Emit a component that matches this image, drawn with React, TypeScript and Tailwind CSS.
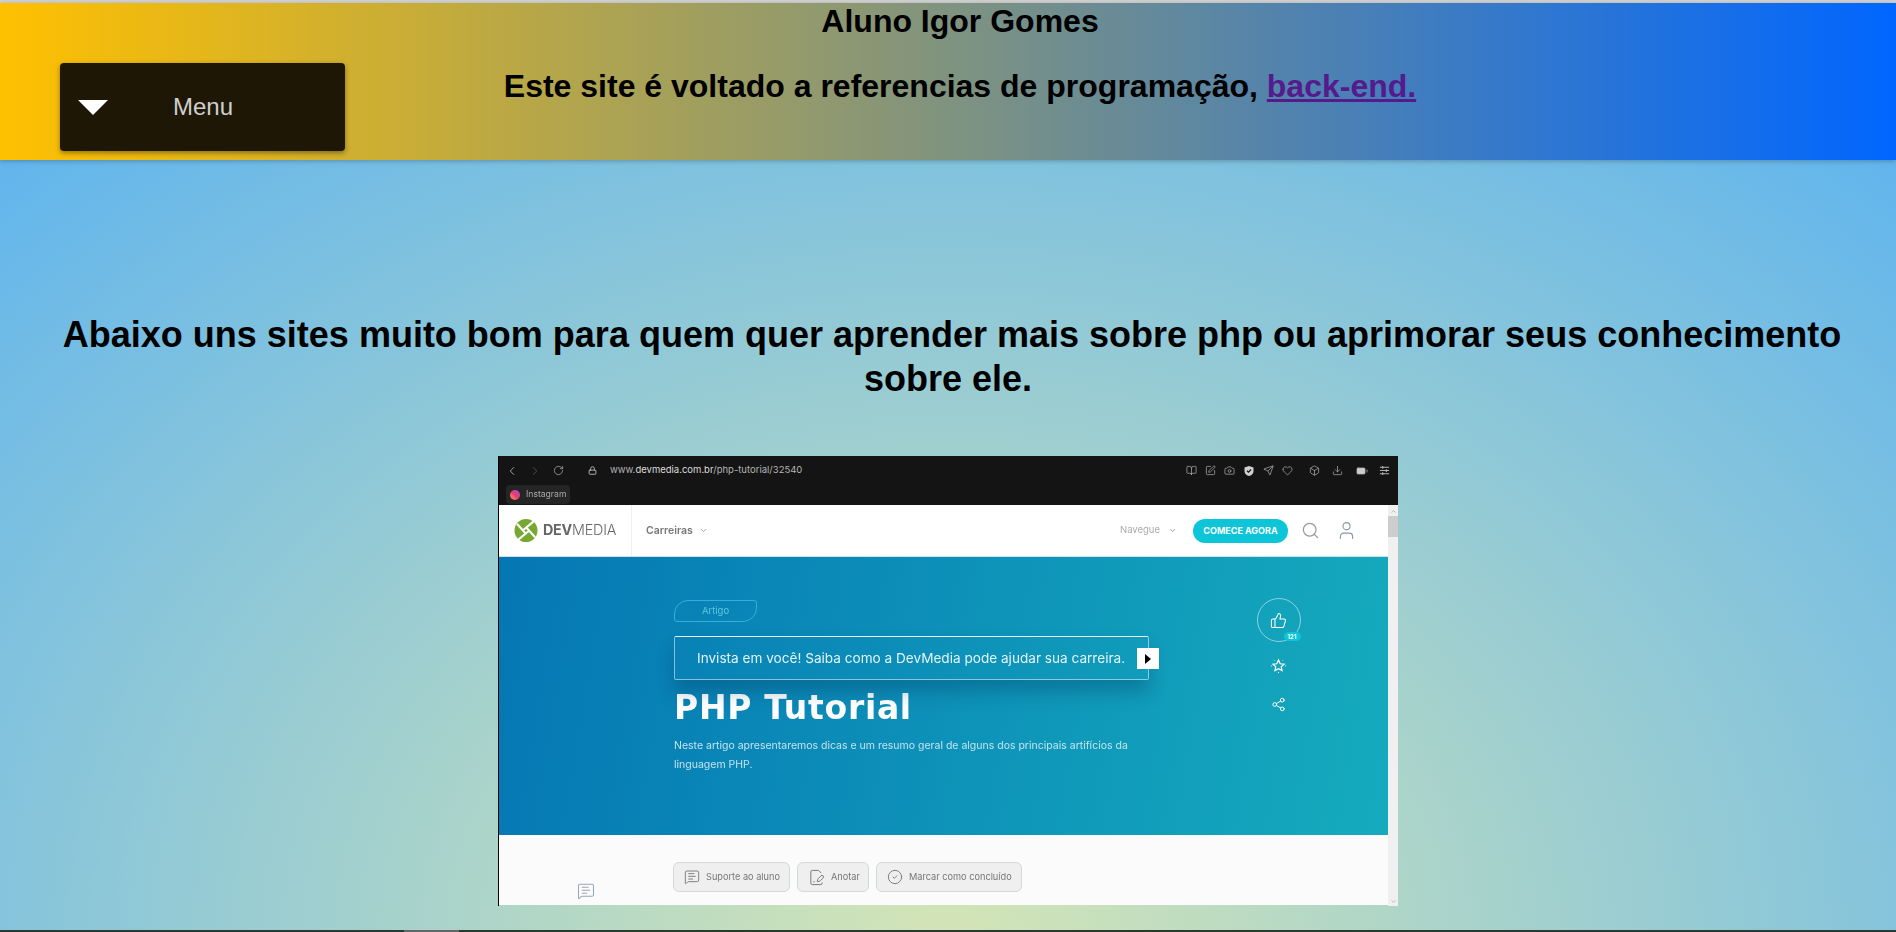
import {
  BatteryMedium,
  BookOpen,
  Box,
  Camera,
  ChevronDown,
  ChevronLeft,
  ChevronRight,
  ChevronUp,
  CircleCheck,
  Download,
  FilePenLine,
  Heart,
  Lock,
  MessageSquareText,
  RotateCw,
  Search,
  Send,
  Share2,
  SquarePen,
  ThumbsUp,
  User,
} from "lucide-react";

function DevMediaLogo() {
  return (
    <svg viewBox="0 0 24 24" className="h-[23px] w-[24px] shrink-0">
      <circle cx="12" cy="12" r="12" fill="#76a832" />
      <path d="M20 2.5 L8.5 12 M4 21.5 L15.5 12 M2.5 5 L12 15.5 M21.5 19 L12 8.5" fill="none" stroke="#fff" strokeWidth="2.2" />
    </svg>
  );
}

function FilledShield() {
  return (
    <svg viewBox="0 0 24 24" className="h-[12px] w-[12px]">
      <path d="M12 2 L21 5 V12 C21 18 16 21 12 22 C8 21 3 18 3 12 V5Z" fill="#d0d0d0" />
      <path d="M8 11.5 L11 14.5 L16 9" fill="none" stroke="#141414" strokeWidth="2.4" />
    </svg>
  );
}

function SlidersGlyph() {
  return (
    <svg viewBox="0 0 12 12" className="ml-[3px] h-[11px] w-[11px]" stroke="currentColor" strokeWidth="1.2">
      <path d="M1 2.5 H11 M1 6 H11 M1 9.5 H11" />
      <path d="M4 1 V4 M8 4.5 V7.5 M4 8 V11" />
    </svg>
  );
}

function SparkleStar() {
  return (
    <svg viewBox="0 0 20 20" className="mt-[15px] h-[17px] w-[17px]" fill="none" stroke="#fff">
      <path d="M10 3.5 L12 8 L16.5 8.5 L13.2 11.5 L14.2 16 L10 13.7 L5.8 16 L6.8 11.5 L3.5 8.5 L8 8Z" strokeWidth="1.4" />
      <path d="M10 17.5 V19 M1 10.5 H2.3 M17.7 10.5 H19 M4.5 3.5 L5.2 4.2 M15.5 3.5 L14.8 4.2" strokeWidth="1" />
    </svg>
  );
}

function BrowserBar() {
  return (
    <div className="h-[49px] bg-[#141414] text-[#b5b5b5]">
      <div className="flex h-[29px] items-center pl-[6px] pr-[8px]">
        <ChevronLeft size={14} strokeWidth={1.5} />
        <ChevronRight size={14} strokeWidth={1.5} className="ml-[9px] text-[#555]" />
        <RotateCw size={11} strokeWidth={1.5} className="ml-[11px]" />
        <Lock size={9} strokeWidth={2.5} className="ml-[24px]" />
        <span className="ml-[13px] text-[9.5px]">
          www.<span className="text-[#ddd]">devmedia.com.br</span>/php-tutorial/32540
        </span>
        <div className="ml-auto flex items-center gap-[8px]">
          <BookOpen size={11} strokeWidth={1.5} />
          <SquarePen size={11} strokeWidth={1.5} />
          <Camera size={11} strokeWidth={1.5} />
          <FilledShield />
          <Send size={11} strokeWidth={1.5} />
          <Heart size={11} strokeWidth={1.5} />
          <Box size={11} strokeWidth={1.5} className="ml-[8px]" />
          <Download size={11} strokeWidth={1.5} className="ml-[4px]" />
          <BatteryMedium size={12} strokeWidth={1.5} className="ml-[5px] fill-[#ccc]" />
          <SlidersGlyph />
        </div>
      </div>
      <div className="ml-[7px] flex h-[19px] w-[64px] items-center gap-[6px] rounded-sm bg-[#252525] pl-[4px] text-[8.6px] text-[#aaa]">
        <span className="h-[10px] w-[10px] rounded-full bg-gradient-to-tr from-[#f7a13a] via-[#e8366f] to-[#a13be0]" />
        Instagram
      </div>
    </div>
  );
}

function SiteNav() {
  return (
    <div className="flex h-[52px] items-center border-b border-[#cfe3ea] bg-white">
      <div className="flex h-full w-[133px] items-center gap-[5px] border-r border-[#f0f0f0] pl-[15px]">
        <DevMediaLogo />
        <span className="text-[14.3px] leading-none tracking-[-0.2px] text-[#666]">
          <span className="font-bold">DEV</span>
          <span className="font-light">MEDIA</span>
        </span>
      </div>
      <span className="ml-[14px] text-[10.5px] font-semibold text-[#777]">Carreiras</span>
      <ChevronDown size={9} className="ml-[6px] text-[#888]" />
      <span className="ml-auto text-[9.5px] text-[#aaa]">Navegue</span>
      <ChevronDown size={9} className="ml-[8px] text-[#888]" />
      <span className="ml-[16px] flex h-[24px] w-[95px] items-center justify-center rounded-full bg-[#0cc5d8] text-[9px] font-bold text-white">
        COMECE AGORA
      </span>
      <Search size={19} strokeWidth={1.6} className="ml-[13px] text-[#999]" />
      <User size={21} strokeWidth={1.3} className="ml-[16px] mr-[31px] text-[#8a9aa5]" />
    </div>
  );
}

function Hero() {
  return (
    <div className="flex h-[278px] bg-[linear-gradient(100deg,#0577b4,#15abbd)] text-white">
      <div className="ml-[175px] w-[475px] pt-[43px]">
        <div className="flex h-[22px] w-[83px] items-center justify-center rounded-tl-[14px] rounded-br-[14px] rounded-tr-[3px] rounded-bl-[3px] border border-[#35aedb] text-[9.5px] text-[#5cc8e0]">
          Artigo
        </div>
        <div className="relative mt-[14px] flex h-[44px] items-center rounded-[2px] border border-white/50 border-t-white/90 pl-[22px] text-[13.6px] text-[#e4f4f8] shadow-[0_12px_18px_rgba(0,50,90,0.3)]">
          Invista em você! Saiba como a DevMedia pode ajudar sua carreira.
          <span className="absolute -right-[11px] top-[11px] flex h-[21px] w-[22px] items-center justify-center bg-white">
            <span className="h-0 w-0 border-y-[5px] border-l-[6px] border-y-transparent border-l-black" />
          </span>
        </div>
        <h2 className="mt-[6px] font-['DejaVu_Sans',sans-serif] text-[33px] font-bold leading-[44px] tracking-[0.7px]">PHP Tutorial</h2>
        <p className="mt-[6px] w-[465px] whitespace-normal text-[10.5px] leading-[19px] text-[#c4e4ee]">
          Neste artigo apresentaremos dicas e um resumo geral de alguns dos principais artifícios da linguagem PHP.
        </p>
      </div>
      <div className="ml-[107px] flex w-[45px] flex-col items-center pt-[41px]">
        <div className="relative flex h-[44px] w-[44px] items-center justify-center rounded-full border border-white/50">
          <ThumbsUp size={17} strokeWidth={1.5} />
          <span className="absolute -right-[1px] bottom-0 flex h-[9px] w-[17px] items-center justify-center rounded-full bg-[#0cc5d8] text-[6px] font-bold">
            121
          </span>
        </div>
        <SparkleStar />
        <Share2 size={15} strokeWidth={1.6} className="mt-[23px]" />
      </div>
    </div>
  );
}

function ActionRow() {
  const btn =
    "flex h-[30px] items-center gap-[6px] rounded-[6px] border border-[#d3d8dd] bg-[#efefef] pl-[10px] text-[9.2px] text-[#777]";
  return (
    <div className="flex h-[70px] bg-[#fbfbfb]">
      <MessageSquareText size={18} strokeWidth={1.4} className="ml-[78px] mt-[47px] text-[#9aa7b3]" />
      <div className="ml-[78px] mt-[27px] flex gap-[7px]">
        <div className={`${btn} w-[117px]`}>
          <MessageSquareText size={16} strokeWidth={1.4} className="shrink-0" />
          Suporte ao aluno
        </div>
        <div className={`${btn} w-[72px]`}>
          <FilePenLine size={17} strokeWidth={1.4} className="shrink-0" />
          Anotar
        </div>
        <div className={`${btn} w-[146px]`}>
          <CircleCheck size={16} strokeWidth={1.4} className="shrink-0" />
          Marcar como concluído
        </div>
      </div>
    </div>
  );
}

function Screenshot() {
  return (
    <div className="mx-auto flex h-[450px] w-[900px] flex-col overflow-hidden whitespace-nowrap border-l border-black font-['Inter',sans-serif] blur-[0.4px]">
      <BrowserBar />
      <div className="flex min-h-0 flex-1">
        <div className="min-w-0 flex-1">
          <SiteNav />
          <Hero />
          <ActionRow />
        </div>
        <div className="flex w-[10px] flex-col items-center bg-[#f0f0f0] text-[#999]">
          <ChevronUp size={7} className="mt-[3px]" />
          <div className="mt-[1px] h-[21px] w-full bg-[#cdcdcd]" />
          <ChevronDown size={7} className="mt-auto mb-[1px]" />
        </div>
      </div>
    </div>
  );
}

export default function App() {
  return (
    <div className="flex h-[932px] flex-col overflow-hidden bg-[radial-gradient(ellipse_1400px_1100px_at_50%_940px,#d4e5b6_0%,#5fb4ee_100%)] font-['Liberation_Sans',Arial,sans-serif] text-black">
      <div className="h-[3px] bg-[#d3d3d3]" />
      <header className="h-[157px] bg-[linear-gradient(90deg,#ffc000,#0066ff)] pl-[24px] shadow-[0_1px_5px_rgba(0,0,0,0.25)]">
        <h1 className="text-center text-[32px] font-bold leading-[36px]">Aluno Igor Gomes</h1>
        <div className="grid grid-cols-[1fr_auto_1fr] items-start">
          <button className="ml-[36px] mt-[24px] flex h-[88px] w-[285px] items-center rounded-[4px] bg-[#1e1705] text-[24px] text-[#cfcfcf] shadow-[0_2px_5px_rgba(0,0,0,0.4)]">
            <span className="ml-[18px] h-0 w-0 border-x-[15px] border-t-[15px] border-x-transparent border-t-white" />
            <span className="ml-[65px]">Menu</span>
          </button>
          <p className="mt-[29px] text-[32px] font-bold leading-[36px]">
            Este site é voltado a referencias de programação,{" "}
            <a href="#" className="text-[#551a8b] underline">
              back-end.
            </a>
          </p>
        </div>
      </header>
      <main className="flex-1 pt-[153px]">
        <h2 className="px-[40px] text-center indent-[8px] text-[36px] font-bold leading-[44px]">
          Abaixo uns sites muito bom para quem quer aprender mais sobre php ou aprimorar seus conhecimento sobre ele.
        </h2>
        <div className="mt-[55px]">
          <Screenshot />
        </div>
      </main>
      <div className="h-[2px] shrink-0 bg-[#2a3a30] pl-[404px]">
        <div className="h-full w-[55px] bg-[#666]" />
      </div>
    </div>
  );
}
